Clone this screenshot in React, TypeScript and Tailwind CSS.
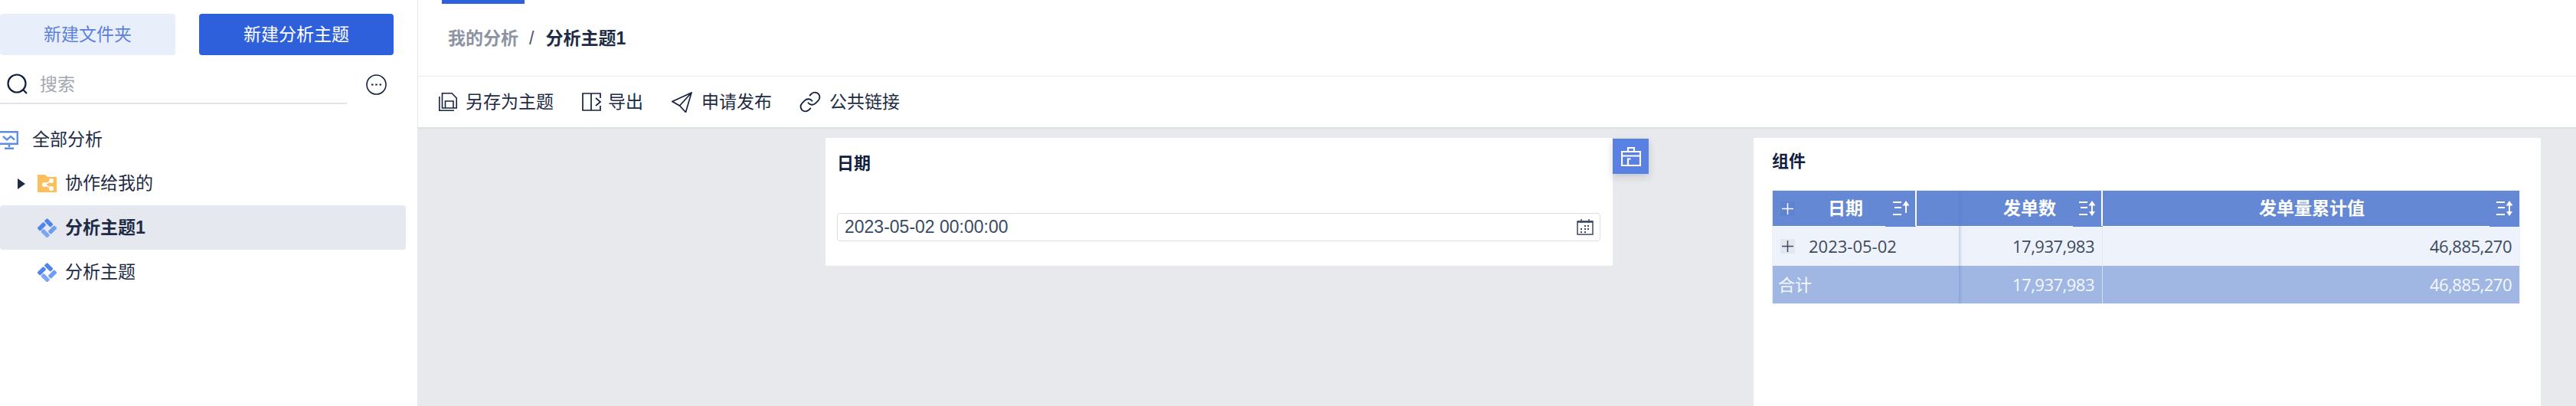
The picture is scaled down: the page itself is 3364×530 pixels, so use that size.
import { Link } from 'lucide-react'

function ThemeIcon() {
  return (
    <svg viewBox="0 0 25 25" className="h-[25px] w-[25px]">
      <g transform="rotate(45 12.5 12.5)">
        <rect x="3.5" y="3.5" width="11.5" height="5.5" rx="1.5" fill="#4f86ee" />
        <rect x="16.5" y="3.5" width="5.5" height="11.5" rx="1.5" fill="#6f9df3" />
        <rect x="10" y="16.5" width="12" height="5.5" rx="1.5" fill="#7ba6f5" />
        <rect x="3.5" y="10.5" width="5.5" height="11.5" rx="1.5" fill="#4f86ee" />
      </g>
    </svg>
  )
}

function SortIcon({ both }: { both?: boolean }) {
  return (
    <svg viewBox="0 0 21 20" className="h-[20px] w-[21px]" fill="none" stroke="white" strokeWidth="2">
      <path d="M0 2h11M2 9h9M0 18h11" />
      <path d="M17 4v12" />
      <path d="M12.5 6.5 17 0l4.5 6.5z" fill="white" stroke="none" />
      {both && <path d="M13 14 17 20l4-6z" fill="white" stroke="none" />}
    </svg>
  )
}

function PlusBox({ tone, stroke }: { tone: string; stroke: string }) {
  return (
    <span className={`ml-[10px] flex h-[19px] w-[19px] items-center justify-center ${tone}`}>
      <svg viewBox="0 0 15 15" className="h-[15px] w-[15px]" fill="none" stroke={stroke} strokeWidth="1.5">
        <path d="M0 7.5h15M7.5 0v15" />
      </svg>
    </span>
  )
}

const bodyFont = 'font-["Open_Sans","Noto_Sans_CJK_SC",sans-serif]'

export default function App() {
  return (
    <div className='flex h-[530px] w-[3364px] overflow-hidden bg-white font-["Liberation_Sans","Noto_Sans_CJK_SC",sans-serif] text-[23px] text-[#1d2b45]'>
      <aside className="flex h-full w-[546px] shrink-0 flex-col border-r border-[#e8e9ed]">
        <div className="mt-[18px] flex h-[54px]">
          <button className="h-full w-[229px] rounded bg-[#e9effa] text-[#5c80de]">新建文件夹</button>
          <button className="ml-[31px] h-full w-[254px] rounded bg-[#2e60dc] text-white">新建分析主题</button>
        </div>
        <div className="mt-[24px] flex h-[41px] items-start">
          <div className="flex h-[40px] w-[453px] items-start border-b-2 border-[#e2e3ea] pl-[9px]">
            <svg viewBox="0 0 27 27" className="h-[27px] w-[27px]" fill="none" stroke="#0f1f3d" strokeWidth="2.2">
              <circle cx="13" cy="13" r="11.5" />
              <path d="M21 21l5 5" />
            </svg>
            <span className="ml-[16px] leading-[28px] text-[#a3a7b0]">搜索</span>
          </div>
          <svg viewBox="0 0 27 27" className="ml-[25px] mt-px h-[27px] w-[27px]" fill="none" stroke="#14233f" strokeWidth="1.6">
            <circle cx="13.5" cy="13.5" r="12.5" />
            <path d="M7 13.5h2.5M12.2 13.5h2.5M17.5 13.5h2.5" strokeWidth="2.2" />
          </svg>
        </div>
        <div className="mt-[17px] flex h-[57px] items-center">
          <svg viewBox="0 0 24 24" className="h-[24px] w-[24px]" fill="none" stroke="#5b8def" strokeWidth="2.4">
            <path d="M0 1.2h22.8v15.6H0" />
            <path d="M4 7l5 4.5L14 7l5 4.5" />
            <path d="M12 17v4M6 22.8h12" />
          </svg>
          <span className="ml-[18px]">全部分析</span>
        </div>
        <div className="flex h-[57px] items-center">
          <span className="ml-[23px] h-0 w-0 border-y-[7px] border-l-[10px] border-y-transparent border-l-[#1d2b45]" />
          <svg viewBox="0 0 25 23" className="ml-[16px] h-[23px] w-[25px]">
            <path d="M0 0h10l3 3h12v20H0z" fill="#fbbf5d" />
            <g fill="white">
              <circle cx="9" cy="13" r="3" />
              <circle cx="18" cy="8" r="3" />
              <circle cx="18" cy="18" r="3" />
            </g>
            <path d="M9 13 18 8M9 13l9 5" stroke="white" strokeWidth="1.5" />
          </svg>
          <span className="ml-[11px]">协作给我的</span>
        </div>
        <div className="flex h-[58px] w-[530px] items-center rounded bg-[#e6e8f0] pl-[49px]">
          <ThemeIcon />
          <span className="ml-[11px] font-bold">分析主题1</span>
        </div>
        <div className="flex h-[58px] items-center pl-[49px]">
          <ThemeIcon />
          <span className="ml-[11px]">分析主题</span>
        </div>
      </aside>
      <main className="flex h-full min-w-0 flex-1 flex-col">
        <header className="h-[100px] shrink-0 border-b border-[#e8e9ed]">
          <div className="ml-[31px] h-[5px] w-[108px] bg-[#2e60dc]" />
          <div className="ml-[39px] mt-[28px] flex items-center">
            <span className="font-bold text-[#8c93a3]">我的分析</span>
            <span className="ml-[14px] text-[#4a5568]">/</span>
            <span className="ml-[15px] font-bold">分析主题1</span>
          </div>
        </header>
        <div className="flex h-[68px] shrink-0 items-center border-b-2 border-[#dfe0e4] pl-[27px]">
          <svg viewBox="0 0 24 24" className="h-[24px] w-[24px]" fill="none" stroke="#14233f" strokeWidth="1.6">
            <path d="M.8 5v18.2H20M4.5 20V.8H17L23.2 7v13zM8.5 20v-9H19v9" />
          </svg>
          <span className="ml-[11px]">另存为主题</span>
          <svg viewBox="0 0 25 24" className="ml-[37px] h-[24px] w-[25px]" fill="none" stroke="#14233f" strokeWidth="1.7">
            <path d="M12 1H1v22h11zM12 1h12v6M12 23h12v-6M18 7l6 5-6 5" />
          </svg>
          <span className="ml-[9px]">导出</span>
          <svg viewBox="0 0 27 27" className="ml-[37px] h-[27px] w-[27px]" fill="none" stroke="#14233f" strokeWidth="1.7">
            <path d="M26 1 1 12.5l9.5 5.5 8 8.5zM26 1 10.5 18" />
          </svg>
          <span className="ml-[12px]">申请发布</span>
          <Link className="ml-[35px] h-[30px] w-[30px] text-[#14233f]" strokeWidth={1.5} />
          <span className="ml-[10px]">公共链接</span>
        </div>
        <div className="flex min-h-0 flex-1 items-start bg-[#e8e9ed] pt-[12px]">
          <section className="ml-[532px] h-[167px] w-[1028px] bg-white px-[15px]">
            <h3 className="mt-[21px] text-[22px] font-bold leading-[26px] text-[#0f1f3d]">日期</h3>
            <div className="mt-[51px] flex h-[37px] w-[997px] items-center justify-between rounded border border-[#dcdde2] pl-[9px] pr-[8px]">
              <span className="text-[#3b4a63]">2023-05-02 00:00:00</span>
              <svg viewBox="0 0 22 21" className="h-[21px] w-[22px]" fill="none" stroke="#3b4a63" strokeWidth="1.5">
                <path d="M1 3h20v17H1zM6 0v5M16 0v5" />
                <path d="M1 3.5h20" strokeWidth="2.5" />
                <path d="M10 9h2M14 9h2M5 13h2M10 13h2M14 13h2M5 17h2M10 17h2" strokeWidth="2" />
              </svg>
            </div>
          </section>
          <button className="mt-px flex h-[46px] w-[47px] items-center justify-center bg-[#5881e3] shadow-[0_4px_10px_rgba(0,0,0,0.15)]">
            <svg viewBox="0 0 26 25" className="h-[25px] w-[26px]" fill="none" stroke="white" strokeWidth="2.2">
              <path d="M9 6V1h8v5M1 6h24v18H1zM1 11.5h24M9 24v-8.5h3.5" />
            </svg>
          </button>
          <section className="ml-[137px] h-full w-[1028px] bg-white px-[25px]">
            <h3 className="ml-[-1px] mt-[18px] text-[22px] font-bold leading-[26px] text-[#0f1f3d]">组件</h3>
            <div className="relative mt-[25px] w-[975px] text-[22px] ring-1 ring-[#e9eef8]">
              <div className="grid h-[46px] grid-cols-[243px_188px_1fr] bg-[#6488d3] text-[23px] font-bold text-white">
                <div className="flex items-center">
                  <PlusBox tone="bg-[#5f83ce]" stroke="white" />
                  <span className="ml-[43px]">日期</span>
                  <span className="ml-[39px]"><SortIcon /></span>
                  <span className="ml-[8px] h-full w-[2px] bg-white" />
                </div>
                <div className="flex items-center justify-end border-r-2 border-white pr-[8px]">
                  <span className="mr-[30px]">发单数</span>
                  <SortIcon both />
                </div>
                <div className="flex items-center justify-end pr-[9px]">
                  <span className="mr-[172px]">发单量累计值</span>
                  <SortIcon both />
                </div>
              </div>
              <div className="flex h-px bg-white">
                <div className="ml-[147px] w-[40px] bg-[#6488d3]" />
                <div className="ml-[205px] w-[39px] bg-[#6488d3]" />
                <div className="ml-[505px] w-[39px] bg-[#6488d3]" />
              </div>
              <div className={`grid h-[51px] grid-cols-[243px_188px_1fr] items-center bg-[#eef3fb] text-[#3d4a60] ${bodyFont}`}>
                <div className="flex items-center">
                  <PlusBox tone="bg-[#e2e7f0]" stroke="#3d4a60" />
                  <span className="ml-[18px]">2023-05-02</span>
                </div>
                <div className="flex h-full items-center justify-end border-r border-[#e3e8f2] pr-[10px] tracking-[-0.5px]">17,937,983</div>
                <div className="pr-[10px] text-right tracking-[-0.5px]">46,885,270</div>
              </div>
              <div className={`grid h-[49px] grid-cols-[243px_188px_1fr] items-center bg-[#a1b7e3] text-[#f4f7fd] ${bodyFont}`}>
                <div className="pl-[7px]">合计</div>
                <div className="flex h-full items-center justify-end border-r border-[#d4def2] pr-[10px] tracking-[-0.5px]">17,937,983</div>
                <div className="pr-[10px] text-right tracking-[-0.5px]">46,885,270</div>
              </div>
              <div className="pointer-events-none absolute inset-y-0 left-[243px] w-[5px] bg-gradient-to-r from-[#4a6fbd]/25 to-transparent" />
            </div>
          </section>
        </div>
      </main>
    </div>
  )
}
